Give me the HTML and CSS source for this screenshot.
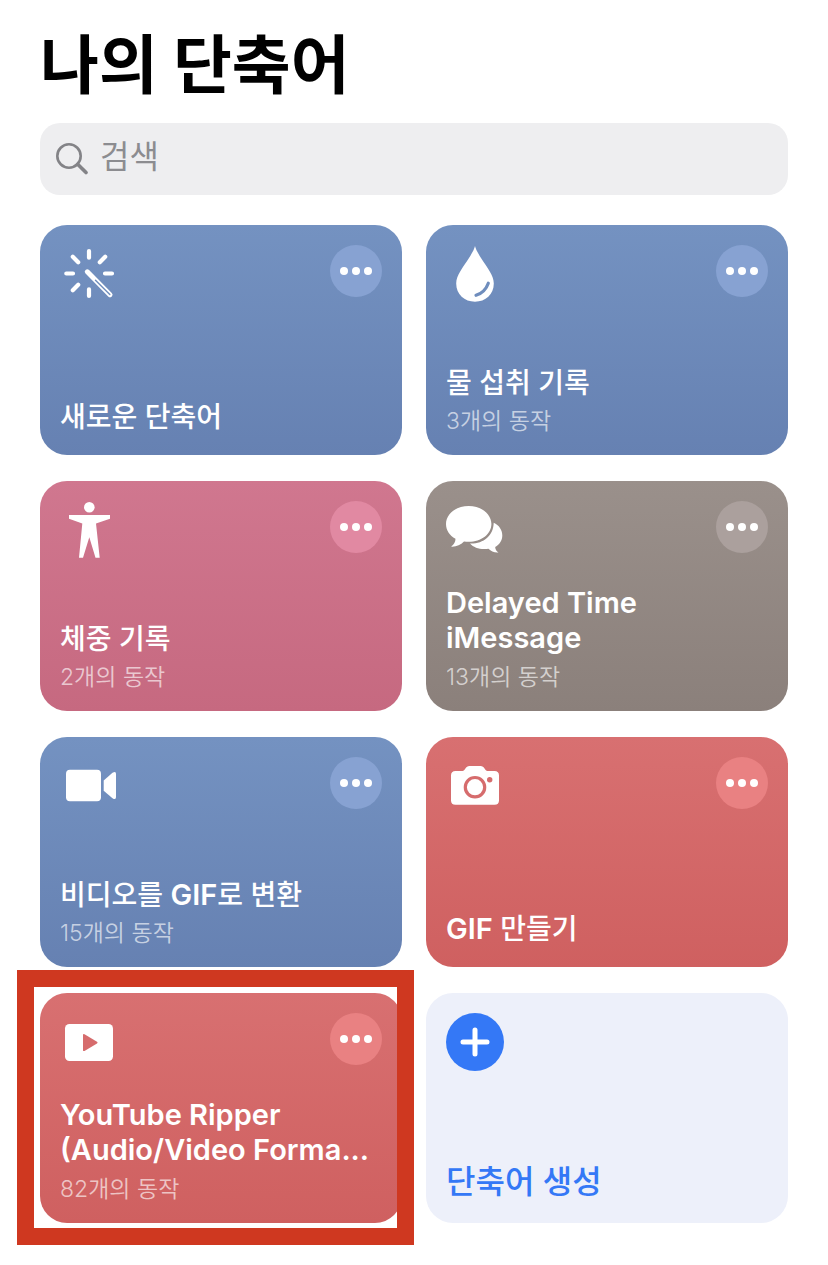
FILE: index.html
```html
<!DOCTYPE html>
<html lang="ko">
<head>
<meta charset="utf-8">
<meta name="viewport" content="width=device-width, initial-scale=1">
<title>나의 단축어</title>
<link rel="stylesheet" href="styles.css">
</head>
<body>
<svg class="defs" aria-hidden="true">
  <symbol id="dots" viewBox="0 0 52 52">
    <circle cx="14" cy="26" r="4"/><circle cx="26" cy="26" r="4"/><circle cx="38" cy="26" r="4"/>
  </symbol>
</svg>
<main class="page">
  <h1 class="page-title">나의 단축어</h1>

  <label class="search">
    <svg class="search-icon" viewBox="0 0 32 32" aria-hidden="true">
      <circle cx="13" cy="13" r="11.700"/><path d="M21.700 21.200L30 29.500" class="handle"/>
    </svg>
    <input class="search-input" type="search" placeholder="검색" aria-label="검색">
  </label>

  <section class="grid">
    <article class="card blue">
      <div class="card-top">
        <svg class="icon" viewBox="0 0 58 58" aria-hidden="true">
          <path class="ray" d="M29 6V12.7M29 44.3V51M6.3 28.5H13M45 28.5H52M12.8 11.8L18.2 17.2M45.2 11.8L39.8 17.2M12.8 45.2L18.2 39.8"/>
          <path class="wand" d="M27.3 26.8L50 49.7"/>
          <path class="wand-slot" d="M35.5 35.3L49.8 49.6"/>
        </svg>
        <button class="more" type="button" aria-label="더 보기"><svg class="dots"><use href="#dots"/></svg></button>
      </div>
      <h2 class="name">새로운 단축어</h2>
    </article>

    <article class="card blue">
      <div class="card-top">
        <svg class="icon" viewBox="0 0 58 58" aria-hidden="true">
          <path d="M29 1C29.5 3.5 31.5 7.5 35 13C41 22.500 47.800 30 47.800 38.500C47.800 49.500 39.500 56.700 29 56.700S10.200 49.500 10.200 38.500C10.200 30 17 22.500 23 13C26.500 7.500 28.500 3.500 29 1Z"/>
          <path class="shine" d="M30 50.300Q39 47.500 42.300 38.200"/>
        </svg>
        <button class="more" type="button" aria-label="더 보기"><svg class="dots"><use href="#dots"/></svg></button>
      </div>
      <h2 class="name">물 섭취 기록</h2>
      <p class="count">3개의 동작</p>
    </article>

    <article class="card pink">
      <div class="card-top">
        <svg class="icon" viewBox="0 0 58 58" aria-hidden="true">
          <circle cx="29.300" cy="6.200" r="5.300"/>
          <path d="M9 14H50V17.700L36 22.500L39.700 56.700H35.500L29.300 36.300L23 56.700H19L22.300 22.500L9 17.700Z"/>
        </svg>
        <button class="more" type="button" aria-label="더 보기"><svg class="dots"><use href="#dots"/></svg></button>
      </div>
      <h2 class="name">체중 기록</h2>
      <p class="count">2개의 동작</p>
    </article>

    <article class="card brown">
      <div class="card-top">
        <svg class="icon" viewBox="0 0 58 58" aria-hidden="true">
          <path d="M22.700 5C35.300 5 45.400 13 45.400 23C45.400 33 35.300 40.800 22.700 40.800C21 40.800 19.500 40.800 18 40.500C14.500 44 10 46 5 45.600C8 43.500 9.500 41 9.500 37.800C3.500 34.500 0 29 0 23C0 13 10 5 22.700 5Z"/>
          <path d="M47.700 21.700C53 24 56.300 29 56.300 34.500C56.300 39.500 53.800 43.300 49.200 46C49.300 48.500 50.500 50.500 52.500 51.500C48.500 52 45 50 42.500 47.700C35 49 28 47 24 42.500C37 43 47.500 35 47.700 21.700Z"/>
        </svg>
        <button class="more" type="button" aria-label="더 보기"><svg class="dots"><use href="#dots"/></svg></button>
      </div>
      <h2 class="name latin">Delayed Time iMessage</h2>
      <p class="count">13개의 동작</p>
    </article>

    <article class="card blue">
      <div class="card-top">
        <svg class="icon" viewBox="0 0 58 58" aria-hidden="true">
          <rect x="6" y="12.700" width="35" height="31.600" rx="4"/>
          <path d="M43.700 23.500L52.500 15.800Q56 13.500 56 17V40Q56 43.500 52.500 41.200L43.700 33.700Z"/>
        </svg>
        <button class="more" type="button" aria-label="더 보기"><svg class="dots"><use href="#dots"/></svg></button>
      </div>
      <h2 class="name">비디오를 <span class="latin">GIF</span>로 변환</h2>
      <p class="count">15개의 동작</p>
    </article>

    <article class="card red">
      <div class="card-top">
        <svg class="icon" viewBox="0 0 58 58" aria-hidden="true">
          <path d="M5 18.500Q5 14 9.500 14H16.500C19 14 19.500 9 23.500 9H34.500C38.500 9 39 14 41.500 14H48.500Q53 14 53 18.500V43.500Q53 47.700 48.500 47.700H9.500Q5 47.700 5 43.500Z"/>
          <circle class="lens" cx="29" cy="30.200" r="9.700"/>
          <circle class="hole" cx="43.700" cy="22.700" r="2.700"/>
        </svg>
        <button class="more" type="button" aria-label="더 보기"><svg class="dots"><use href="#dots"/></svg></button>
      </div>
      <h2 class="name"><span class="latin">GIF</span> 만들기</h2>
    </article>

    <article class="card red highlighted">
      <div class="card-top">
        <svg class="icon" viewBox="0 0 58 58" aria-hidden="true">
          <rect x="5" y="11" width="48" height="37" rx="4.500"/>
          <path class="hole" d="M23 22Q23 20.500 24.500 21.300L37 28.800Q38.300 29.600 37 30.400L24.500 37.900Q23 38.500 23 37.200Z"/>
        </svg>
        <button class="more" type="button" aria-label="더 보기"><svg class="dots"><use href="#dots"/></svg></button>
      </div>
      <h2 class="name latin">YouTube Ripper (Audio/Video Forma...</h2>
      <p class="count">82개의 동작</p>
    </article>

    <button class="card create" type="button">
      <svg class="icon" viewBox="0 0 58 58" aria-hidden="true">
        <circle class="disc" cx="29" cy="29" r="29"/>
        <path class="plus" d="M17 29H41M29 17V41"/>
      </svg>
      <span class="create-label">단축어 생성</span>
    </button>
  </section>
</main>
</body>
</html>
```

FILE: styles.css
```css
* {
  box-sizing: border-box;
}

body {
  margin: 0;
  background: #fff;
  color: #000;
  font-family: Inter, "Noto Sans CJK KR", sans-serif;
}

.defs {
  position: absolute;
  width: 0;
  height: 0;
}

.page {
  padding: 25px 40px 40px;
}

.page-title {
  margin: 0 0 18px;
  font-size: 64px;
  line-height: 80px;
  font-weight: 700;
}

.search {
  display: flex;
  align-items: center;
  gap: 12px;
  height: 72px;
  padding: 0 16px;
  border-radius: 20px;
  background: #eeeef0;
}

.search-icon {
  flex: none;
  width: 32px;
  height: 32px;
  fill: none;
  stroke: #838387;
  stroke-width: 2.6;
  stroke-linecap: round;
}

.handle {
  stroke-width: 3.6;
}

.search-input {
  flex: 1;
  min-width: 0;
  height: 48px;
  padding: 0 0 6px;
  border: 0;
  outline: 0;
  background: none;
  font: 400 32px/42px Inter, "Noto Sans CJK KR", sans-serif;
}

.search-input::placeholder {
  color: #8c8c90;
  opacity: 1;
}

.grid {
  display: grid;
  grid-template-columns: 1fr 1fr;
  gap: 26px 24px;
  margin-top: 30px;
}

.card {
  position: relative;
  display: flex;
  flex-direction: column;
  min-width: 0;
  min-height: 230px;
  padding: 20px;
  border: 0;
  border-radius: 27px;
  color: #fff;
  background: linear-gradient(var(--top), var(--bottom));
}

.blue {
  --top: #7492c1;
  --bottom: #6681b2;
  --hole: #6f8dbd;
  --chip: #87a2d2;
}

.pink {
  --top: #d0778f;
  --bottom: #c66980;
  --chip: #e189a2;
}

.brown {
  --top: #9a908b;
  --bottom: #8b807b;
  --chip: #aba09d;
}

.red {
  --top: #d87071;
  --bottom: #cf6060;
  --hole: #d66c6d;
  --chip: #e98182;
}

.card-top {
  display: flex;
  justify-content: space-between;
  align-items: flex-start;
  margin-bottom: auto;
}

.icon {
  display: block;
  width: 58px;
  height: 58px;
  fill: #fff;
  stroke-linecap: round;
}

.ray {
  fill: none;
  stroke: #fff;
  stroke-width: 4.2;
}

.wand {
  stroke: #fff;
  stroke-width: 5;
}

.wand-slot {
  stroke: var(--hole);
  stroke-width: 1.4;
}

.shine,
.lens {
  fill: none;
  stroke: var(--hole);
  stroke-width: 3.2;
}

.hole {
  fill: var(--hole);
}

.more {
  width: 52px;
  height: 52px;
  padding: 0;
  border: 0;
  border-radius: 50%;
  background: var(--chip);
}

.dots {
  display: block;
  width: 52px;
  height: 52px;
  fill: #fff;
}

.name {
  margin: 0;
  font-size: 28px;
  line-height: 35px;
  font-weight: 500;
}

.latin {
  font-size: 29px;
  font-weight: 600;
}

.count {
  margin: 6px 0 0;
  font-size: 23px;
  line-height: 28px;
  font-weight: 350;
  color: rgba(255, 255, 255, 0.64);
}

.name.latin + .count {
  margin-top: 8px;
}

.highlighted::after {
  content: "";
  position: absolute;
  inset: -23px -12px -22px -23px;
  border: 17px solid #cf3820;
  pointer-events: none;
}

.create {
  justify-content: space-between;
  align-items: flex-start;
  background: #edf0fa;
}

.disc {
  fill: #3478f6;
}

.plus {
  stroke: #fff;
  stroke-width: 5;
}

.create-label {
  color: #3478f6;
  font: 500 32px/42px Inter, "Noto Sans CJK KR", sans-serif;
}
```
